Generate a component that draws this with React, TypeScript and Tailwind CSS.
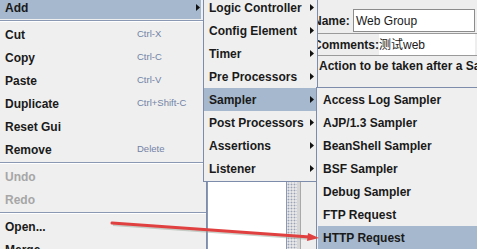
import type { ReactNode } from 'react'

const sans = "font-['Liberation_Sans','Noto_Sans_CJK_SC',sans-serif]"

function Arrow() {
  return (
    <svg width="4" height="7" viewBox="0 0 4 7" className="shrink-0">
      <path d="M0 0 L4 3.5 L0 7 Z" fill="#111" />
    </svg>
  )
}

function Separator() {
  return (
    <div className="h-[4px] pt-[1px]">
      <div className="h-px bg-[#8a98b4]" />
      <div className="h-px bg-white" />
    </div>
  )
}

interface MainItemProps {
  label: string
  shortcut?: string
  disabled?: boolean
  active?: boolean
  sub?: boolean
}

function MainItem({ label, shortcut, disabled, active, sub }: MainItemProps) {
  return (
    <div
      className={`h-[23px] mr-[5px] pl-[5px] grid grid-cols-[132px_1fr] items-center ${
        active ? 'bg-[#a5b8cd]' : ''
      }`}
    >
      <span className={`font-bold text-[12px] ${disabled ? 'text-[#a6a6a6]' : 'text-[#1a1a1a]'}`}>
        {label}
      </span>
      {shortcut && <span className="text-[9.5px] text-[#7282a6]">{shortcut}</span>}
      {sub && (
        <span className="flex justify-end pr-[1px]">
          <Arrow />
        </span>
      )}
    </div>
  )
}

function SubItem({ label, active, sub }: { label: string; active?: boolean; sub?: boolean }) {
  return (
    <div
      className={`h-[23px] flex items-center pl-[5px] pr-[3px] ${active ? 'bg-[#a5b8cd]' : ''}`}
    >
      <span className="font-bold text-[12px] text-[#1a1a1a] whitespace-nowrap">{label}</span>
      {sub && (
        <span className="ml-auto">
          <Arrow />
        </span>
      )}
    </div>
  )
}

function Menu({ className, children }: { className: string; children: ReactNode }) {
  return (
    <div className={`absolute bg-[#efefef] border border-[#7d8cab] ${className}`}>{children}</div>
  )
}

export default function App() {
  return (
    <div className={`relative w-[477px] h-[249px] overflow-hidden bg-[#eeeeee] ${sans}`}>
      {/* window behind the popup menus */}
      <div className="flex h-full">
        <div className="w-[207px] shrink-0 bg-[#eeeeee]" />
        <div className="w-[80px] shrink-0 bg-white border-x border-[#8a98b4]" />
        <div className="w-[10px] shrink-0 bg-[#e6e6e6] bg-[radial-gradient(circle,#9aa3b5_0.8px,transparent_1.1px)] bg-[length:3px_3px]" />
        <div className="w-[4px] shrink-0 bg-[#d6d6d6] border-r border-[#a9a9a9]" />
        <div className="flex-1 min-w-0 overflow-hidden pt-[9px]">
          <div className="h-[23px] flex items-center pl-[12px] pr-[2px]">
            <span className="font-bold text-[12px] text-[#1a1a1a] w-[40px] shrink-0">Name:</span>
            <div className="flex-1 h-[23px] bg-white border border-[#8c8c8c] flex items-center pl-[2px] text-[12px] text-[#1a1a1a]">
              Web Group
            </div>
          </div>
          <div className="mt-[1px] h-[23px] flex items-center border-y border-[#9a9a9a] pl-[12px] pr-[2px]">
            <span className="font-bold text-[12px] text-[#1a1a1a] shrink-0">Comments:</span>
            <div className="flex-1 h-full bg-white flex items-center text-[12px] text-[#1a1a1a]">
              测试web
            </div>
          </div>
          <div className="h-[20px] flex items-center pl-[18px] whitespace-nowrap font-bold text-[12px] text-[#1a1a1a]">
            Action to be taken after a Sampler error
          </div>
        </div>
      </div>

      {/* context menu */}
      <Menu className="left-[-1px] top-[-5px] w-[208px]">
        <MainItem label="Add" active sub />
        <Separator />
        <MainItem label="Cut" shortcut="Ctrl-X" />
        <MainItem label="Copy" shortcut="Ctrl-C" />
        <MainItem label="Paste" shortcut="Ctrl-V" />
        <MainItem label="Duplicate" shortcut="Ctrl+Shift-C" />
        <MainItem label="Reset Gui" />
        <MainItem label="Remove" shortcut="Delete" />
        <Separator />
        <MainItem label="Undo" disabled />
        <MainItem label="Redo" disabled />
        <Separator />
        <MainItem label="Open..." />
        <MainItem label="Merge" />
      </Menu>

      {/* Add submenu */}
      <Menu className="left-[203px] top-[-5px] w-[115px] pb-[1px]">
        <SubItem label="Logic Controller" sub />
        <SubItem label="Config Element" sub />
        <SubItem label="Timer" sub />
        <SubItem label="Pre Processors" sub />
        <SubItem label="Sampler" active sub />
        <SubItem label="Post Processors" sub />
        <SubItem label="Assertions" sub />
        <SubItem label="Listener" sub />
      </Menu>

      {/* Sampler submenu */}
      <Menu className="left-[316px] top-[87px] w-[200px]">
        <div className="pl-[1px]">
          <SubItem label="Access Log Sampler" />
          <SubItem label="AJP/1.3 Sampler" />
          <SubItem label="BeanShell Sampler" />
          <SubItem label="BSF Sampler" />
          <SubItem label="Debug Sampler" />
          <SubItem label="FTP Request" />
          <SubItem label="HTTP Request" active />
        </div>
      </Menu>

      {/* red annotation arrow */}
      <svg className="absolute inset-0 pointer-events-none" width="477" height="249">
        <line x1="113" y1="225" x2="311" y2="239" stroke="#9aa59a" strokeOpacity="0.5" strokeWidth="2" />
        <line x1="112" y1="223" x2="310" y2="237" stroke="#e0403f" strokeWidth="3" strokeLinecap="round" />
        <path d="M308 233 L319 238 L307 241 Z" fill="#e0403f" />
      </svg>
    </div>
  )
}
